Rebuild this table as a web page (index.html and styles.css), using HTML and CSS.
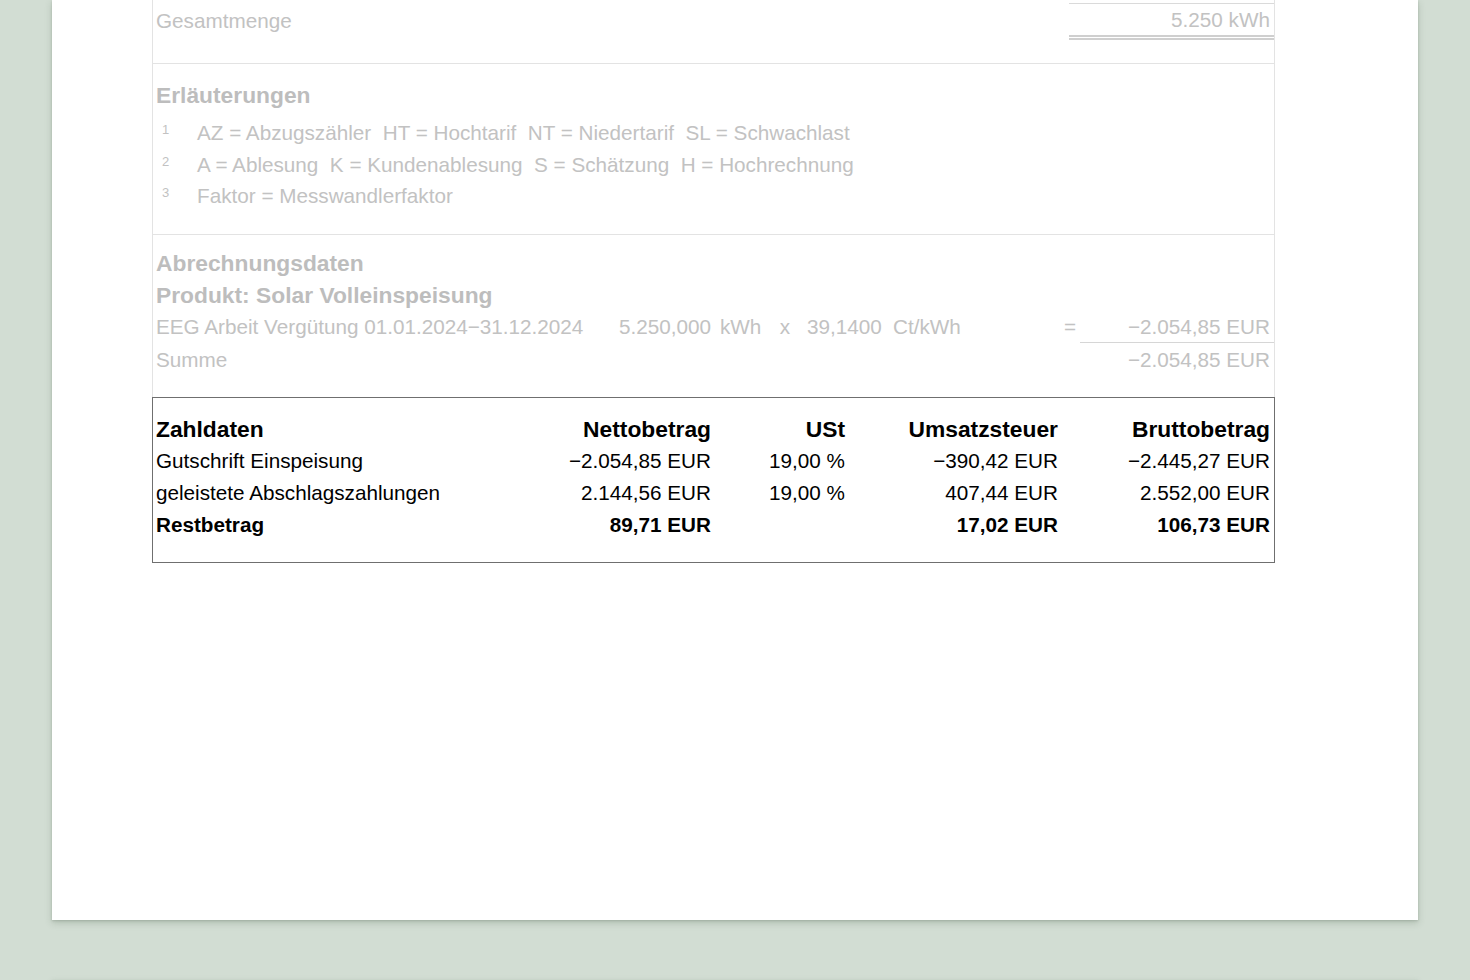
FILE: index.html
```html
<!DOCTYPE html>
<html lang="de">
<head>
<meta charset="utf-8">
<title>Abrechnung</title>
<link rel="stylesheet" href="styles.css">
</head>
<body>
<div class="desk">
  <div class="paper">
    <div class="doc">
      <section class="sec sec-total">
        <div class="total-row">
          <span class="total-label">Gesamtmenge</span>
          <span class="total-val">5.250 kWh</span>
        </div>
      </section>

      <section class="sec sec-notes">
        <h2 class="sec-title">Erläuterungen</h2>
        <ul class="notes">
          <li><span class="fn">1</span><span class="note-text">AZ = Abzugszähler&nbsp;&nbsp;HT = Hochtarif&nbsp;&nbsp;NT = Niedertarif&nbsp;&nbsp;SL = Schwachlast</span></li>
          <li><span class="fn">2</span><span class="note-text">A = Ablesung&nbsp;&nbsp;K = Kundenablesung&nbsp;&nbsp;S = Schätzung&nbsp;&nbsp;H = Hochrechnung</span></li>
          <li><span class="fn">3</span><span class="note-text">Faktor = Messwandlerfaktor</span></li>
        </ul>
      </section>

      <section class="sec sec-calc">
        <h2 class="sec-title">Abrechnungsdaten</h2>
        <h2 class="sec-title">Produkt: Solar Volleinspeisung</h2>
        <div class="calc-row">
          <span class="c-desc">EEG Arbeit Vergütung 01.01.2024−31.12.2024</span>
          <span class="c-qty">5.250,000</span>
          <span class="c-unit">kWh</span>
          <span class="c-x">x</span>
          <span class="c-price">39,1400</span>
          <span class="c-punit">Ct/kWh</span>
          <span class="c-eq">=</span>
          <span class="c-val">−2.054,85 EUR</span>
        </div>
        <div class="sum-row">
          <span class="sum-label">Summe</span>
          <span class="sum-val">−2.054,85 EUR</span>
        </div>
      </section>

      <section class="pay">
        <div class="pay-grid">
          <div class="p-head p-l">Zahldaten</div>
          <div class="p-head p-r">Nettobetrag</div>
          <div class="p-head p-r">USt</div>
          <div class="p-head p-r">Umsatzsteuer</div>
          <div class="p-head p-r">Bruttobetrag</div>

          <div class="p-cell p-l">Gutschrift Einspeisung</div>
          <div class="p-cell p-r">−2.054,85 EUR</div>
          <div class="p-cell p-r">19,00 %</div>
          <div class="p-cell p-r">−390,42 EUR</div>
          <div class="p-cell p-r">−2.445,27 EUR</div>

          <div class="p-cell p-l">geleistete Abschlagszahlungen</div>
          <div class="p-cell p-r">2.144,56 EUR</div>
          <div class="p-cell p-r">19,00 %</div>
          <div class="p-cell p-r">407,44 EUR</div>
          <div class="p-cell p-r">2.552,00 EUR</div>

          <div class="p-cell p-l p-bold">Restbetrag</div>
          <div class="p-cell p-r p-bold">89,71 EUR</div>
          <div class="p-cell p-r"></div>
          <div class="p-cell p-r p-bold">17,02 EUR</div>
          <div class="p-cell p-r p-bold">106,73 EUR</div>
        </div>
      </section>
    </div>
  </div>
  <div class="paper paper-next"></div>
</div>
</body>
</html>
```

FILE: styles.css
```css
html, body {
  margin: 0;
  padding: 0;
  height: 100%;
  overflow: hidden;
}

body {
  background: #d2ddd3;
  font-family: "Liberation Sans", Arial, sans-serif;
  font-size: 20.7px;
  color: #000;
}

.desk {
  padding-left: 52px;
}

.paper {
  width: 1366px;
  height: 920px;
  background: #fff;
  box-shadow: 0 3px 7px rgba(60, 80, 60, 0.22), 0 1px 2px rgba(60, 80, 60, 0.18);
}

.paper-next {
  margin-top: 60px;
  height: 60px;
}

.doc {
  margin-left: 100px;
  width: 1123px;
}

/* faded upper sections */
.sec {
  border-left: 1px solid #e3e3e3;
  border-right: 1px solid #e3e3e3;
  padding-left: 3px;
  color: #c2c2c2;
}

.sec-total {
  border-bottom: 1px solid #e3e3e3;
  padding-top: 3px;
  padding-bottom: 23px;
}

.total-row {
  display: flex;
  justify-content: space-between;
  align-items: flex-start;
}

.total-label {
  line-height: 32px;
  padding-top: 2px;
}

.total-val {
  width: 201px;
  text-align: right;
  padding-right: 4px;
  padding-top: 1px;
  line-height: 30px;
  border-top: 1px solid #dadada;
  border-bottom: 5px double #cfcfcf;
}

.sec-title {
  margin: 0;
  font-size: 22.8px;
  font-weight: bold;
  line-height: 32px;
  color: #bdbdbd;
}

.sec-notes {
  border-bottom: 1px solid #e3e3e3;
  padding-top: 15px;
  padding-bottom: 22px;
}

.notes {
  list-style: none;
  margin: 6px 0 0 0;
  padding: 0;
}

.notes li {
  display: flex;
  line-height: 31.5px;
}

.fn {
  width: 41px;
  padding-left: 6px;
  padding-top: 3px;
  box-sizing: border-box;
  font-size: 13px;
  line-height: 20px;
}

.note-text {
  white-space: nowrap;
}

.sec-calc {
  padding-top: 12px;
  padding-bottom: 21px;
}

.calc-row {
  display: grid;
  grid-template-columns: 444px 111px 59px 30px 88px 172px 20px 194px;
  line-height: 31px;
  white-space: nowrap;
}

.c-qty { text-align: right; }
.c-unit { padding-left: 9px; }
.c-x { text-align: center; }
.c-price { padding-left: 7px; }
.c-punit { padding-left: 5px; }
.c-eq { text-align: center; }
.c-val {
  text-align: right;
  padding-right: 4px;
  border-bottom: 1px solid #d6d6d6;
}

.sum-row {
  display: flex;
  justify-content: space-between;
  line-height: 32px;
  padding-top: 1px;
}

.sum-val {
  padding-right: 4px;
}

/* payment box */
.pay {
  border: 1px solid #6f6f6f;
  padding: 15px 4px 21px 3px;
}

.pay-grid {
  display: grid;
  grid-template-columns: 404px 151px 134px 213px 212px;
  line-height: 32px;
  white-space: nowrap;
}

.p-head {
  font-weight: bold;
  font-size: 22.8px;
}

.p-l { text-align: left; }
.p-r { text-align: right; }
.p-bold { font-weight: bold; }
```
